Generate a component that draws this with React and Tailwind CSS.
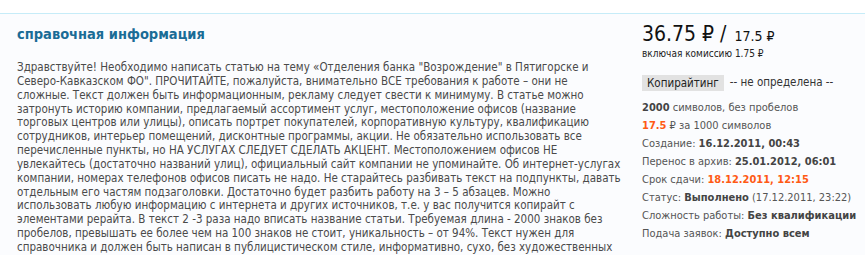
import React from 'react';

const lines = [
    'Здравствуйте! Необходимо написать статью на тему «Отделения банка "Возрождение" в Пятигорске и',
    'Северо-Кавказском ФО". ПРОЧИТАЙТЕ, пожалуйста, внимательно ВСЕ требования к работе – они не',
    'сложные. Текст должен быть информационным, рекламу следует свести к минимуму. В статье можно',
    'затронуть историю компании, предлагаемый ассортимент услуг, местоположение офисов (название',
    'торговых центров или улицы), описать портрет покупателей, корпоративную культуру, квалификацию',
    'сотрудников, интерьер помещений, дисконтные программы, акции. Не обязательно использовать все',
    'перечисленные пункты, но НА УСЛУГАХ СЛЕДУЕТ СДЕЛАТЬ АКЦЕНТ. Местоположением офисов НЕ',
    'увлекайтесь (достаточно названий улиц), официальный сайт компании не упоминайте. Об интернет-услугах',
    'компании, номерах телефонов офисов писать не надо. Не старайтесь разбивать текст на подпункты, давать',
    'отдельным его частям подзаголовки. Достаточно будет разбить работу на 3 – 5 абзацев. Можно',
    'использовать любую информацию с интернета и других источников, т.е. у вас получится копирайт с',
    'элементами рерайта. В текст 2 -3 раза надо вписать название статьи. Требуемая длина - 2000 знаков без',
    'пробелов, превышать ее более чем на 100 знаков не стоит, уникальность – от 94%. Текст нужен для',
    'справочника и должен быть написан в публицистическом стиле, информативно, сухо, без художественных',
];

const font = { fontFamily: '"DejaVu Sans Condensed", "DejaVu Sans", "Liberation Sans", sans-serif' };

function Row({ children }) {
    return <div className="h-[18px] leading-[18px] whitespace-nowrap">{children}</div>;
}

export default function App() {
    return (
        <div className="w-[865px] h-[255px] overflow-hidden bg-white" style={font}>
            <div className="h-[13px]" />
            <div className="border-t border-[#c6ecf8] bg-[#fbfcfe] h-[242px] flex">
                <div className="pl-[17px] w-[625px] shrink-0">
                    <h2 className="mt-[10px] text-[14.5px] leading-[20px] font-bold text-[#1a6c96]">справочная информация</h2>
                    <div className="mt-[17px] text-[11.5px] leading-[13.85px] text-[#4a4a4a]">
                        {lines.map((l, i) => (
                            <div key={i} className="whitespace-nowrap">{l}</div>
                        ))}
                    </div>
                </div>
                <div className="pl-[17px] flex-1 text-[11px] text-[#555]">
                    <div className="mt-[6px] flex items-baseline text-[#111] leading-[28px]">
                        <span className="text-[21px]">36.75 ₽ /</span>
                        <span className="text-[14px] ml-[8px]">17.5 ₽</span>
                    </div>
                    <div className="text-[10px] leading-[12px] -mt-[2px] text-[#222]">включая комиссию 1.75 ₽</div>
                    <div className="mt-[15px] flex items-center h-[16px] text-[#333] text-[11.5px]">
                        <span className="bg-[#e2e2e2] px-[5px] leading-[16px] text-[#222]">Копирайтинг</span>
                        <span className="ml-[6px]">-- не определена --</span>
                    </div>
                    <div className="mt-[8px]">
                        <Row><b className="text-[#444]">2000</b> символов, без пробелов</Row>
                        <Row><b className="text-[#ff5a14]">17.5</b> ₽ за 1000 символов</Row>
                        <Row>Создание: <b className="text-[#444]">16.12.2011, 00:43</b></Row>
                        <Row>Перенос в архив: <b className="text-[#444]">25.01.2012, 06:01</b></Row>
                        <Row>Срок сдачи: <b className="text-[#ff5a14]">18.12.2011, 12:15</b></Row>
                        <Row>Статус: <b className="text-[#444]">Выполнено</b> (17.12.2011, 23:22)</Row>
                        <Row>Сложность работы: <b className="text-[#444]">Без квалификации</b></Row>
                        <Row>Подача заявок: <b className="text-[#444]">Доступно всем</b></Row>
                    </div>
                </div>
            </div>
        </div>
    );
}
